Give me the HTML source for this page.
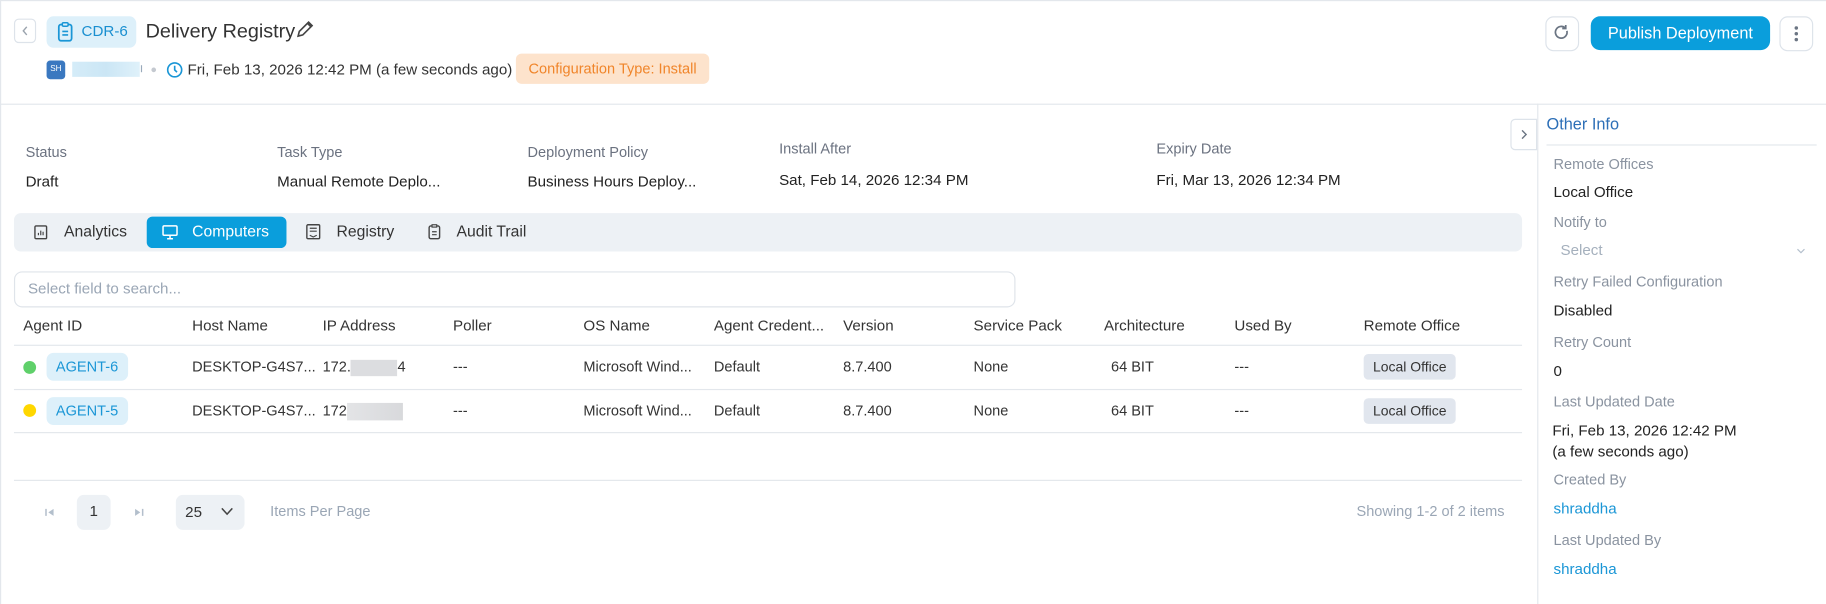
<!DOCTYPE html>
<html><head><meta charset="utf-8"><style>
*{box-sizing:border-box;margin:0;padding:0}
html,body{width:1826px;height:604px;overflow:hidden;background:#fff}
#s{position:absolute;left:0;top:0;width:1568px;height:519px;transform:scale(1.16454);transform-origin:0 0;font-family:"Liberation Sans",sans-serif;color:#333;font-size:13px}
.a{position:absolute;white-space:nowrap}
.lbl{color:#6b7280;font-size:12.5px}
.val{color:#222;font-size:13px}
.rl{color:#8a93a0;font-size:12.5px}
.btn{position:absolute;border:1px solid #dde3ea;border-radius:7px;background:#fff}
.th{color:#333;font-size:13px}
.td{color:#333;font-size:12.5px}
.ag{position:absolute;background:#ddf0fa;color:#1a96d6;border-radius:6px;font-size:12.5px;padding:5px 8px;height:24px}
.lo{position:absolute;background:#e1e6ee;color:#333;border-radius:4px;font-size:12px;padding:4px 8px;height:22px}
</style></head><body><div id="s">
<div class="a" style="left:0;top:0;width:1568px;height:1px;background:#e3e7ec"></div>
<div class="a" style="left:0;top:0;width:1px;height:519px;background:#e3e7ec"></div>
<div class="btn" style="left:12px;top:16px;width:19px;height:21px;border-radius:4px"><svg width="17" height="19" viewBox="0 0 17 19"><path d="M10 6l-3 3.5 3 3.5" fill="none" stroke="#9aa3ad" stroke-width="1.2"/></svg></div>
<div class="a" style="left:40px;top:14px;width:77px;height:27px;background:#ddf0fa;border-radius:6px"></div>
<svg class="a" style="left:48px;top:18px" width="16" height="19" viewBox="0 0 16 19"><rect x="2.5" y="3" width="11" height="14" rx="2" fill="none" stroke="#1a96d6" stroke-width="1.5"/><rect x="5.5" y="1.5" width="5" height="3" rx="1" fill="#ddf0fa" stroke="#1a96d6" stroke-width="1.3"/><path d="M5.5 9h5M5.5 12h5" stroke="#1a96d6" stroke-width="1.4"/></svg>
<div class="a" style="left:70px;top:19px;color:#1a8fd0;font-size:13px">CDR-6</div>
<div class="a" style="left:125px;top:17px;font-size:17px;color:#333">Delivery Registry</div>
<svg class="a" style="left:253px;top:16px" width="18" height="18" viewBox="0 0 18 18"><path d="M3 15l1-4 8-8 3 3-8 8z M11 4l3 3" fill="none" stroke="#444" stroke-width="1.4"/></svg>
<div class="a" style="left:40px;top:52px;width:16px;height:16px;background:#3a78c0;border-radius:3px;color:#fff;font-size:7px;line-height:16px;text-align:center">SH</div>
<div class="a" style="left:62px;top:53px;width:58px;height:13px;background:linear-gradient(90deg,#d5ecf8,#cbe6f5,#dff1fa)"></div>
<div class="a" style="left:121px;top:56px;width:1px;height:6px;background:#9ab"></div>
<div class="a" style="left:130px;top:58px;width:4px;height:4px;border-radius:2px;background:#c4c9d0"></div>
<svg class="a" style="left:143px;top:53px" width="14" height="14" viewBox="0 0 14 14"><circle cx="7" cy="7" r="6" fill="none" stroke="#1a96d6" stroke-width="1.4"/><path d="M7 3.5V7l2 2" fill="none" stroke="#1a96d6" stroke-width="1.4"/></svg>
<div class="a" style="left:161px;top:52px;font-size:13px;color:#333">Fri, Feb 13, 2026 12:42 PM (a few seconds ago)</div>
<div class="a" style="left:443px;top:46px;width:166px;height:26px;background:#fde3cc;border-radius:5px;color:#f0852a;font-size:12.5px;line-height:26px;text-align:center">Configuration Type: Install</div>
<div class="btn" style="left:1327px;top:14px;width:29px;height:30px"><svg width="27" height="28" viewBox="0 0 27 28"><path d="M17.5 11.5a5 5 0 1 1-1.5-2.5" fill="none" stroke="#6b7583" stroke-width="1.5"/><path d="M16.5 6.5v3h-3" fill="none" stroke="#6b7583" stroke-width="1.5"/></svg></div>
<div class="a" style="left:1366px;top:14px;width:154px;height:29px;background:#0a9edc;border-radius:8px;color:#fff;font-size:14px;line-height:29px;text-align:center">Publish Deployment</div>
<div class="btn" style="left:1528px;top:14px;width:29px;height:30px"><svg width="27" height="28" viewBox="0 0 27 28"><circle cx="13.5" cy="9" r="1.5" fill="#6b7583"/><circle cx="13.5" cy="14" r="1.5" fill="#6b7583"/><circle cx="13.5" cy="19" r="1.5" fill="#6b7583"/></svg></div>
<div class="a" style="left:0;top:89px;width:1568px;height:1px;background:#e3e7ec"></div>

<div class="a lbl" style="left:22px;top:124px">Status</div>
<div class="a lbl" style="left:238px;top:124px">Task Type</div>
<div class="a lbl" style="left:453px;top:124px">Deployment Policy</div>
<div class="a lbl" style="left:669px;top:121px">Install After</div>
<div class="a lbl" style="left:993px;top:121px">Expiry Date</div>
<div class="a val" style="left:22px;top:148px">Draft</div>
<div class="a val" style="left:238px;top:148px">Manual Remote Deplo...</div>
<div class="a val" style="left:453px;top:148px">Business Hours Deploy...</div>
<div class="a val" style="left:669px;top:147px">Sat, Feb 14, 2026 12:34 PM</div>
<div class="a val" style="left:993px;top:147px">Fri, Mar 13, 2026 12:34 PM</div>

<div class="a" style="left:12px;top:183px;width:1295px;height:33px;background:#edf1f5;border-radius:6px"></div>
<div class="a" style="left:126px;top:186px;width:120px;height:27px;background:#0a9edc;border-radius:5px"></div>
<svg class="a" style="left:29px;top:193px" width="12" height="13" viewBox="0 0 12 13"><rect x="1" y="1" width="10" height="11" rx="1" fill="none" stroke="#444" stroke-width="1.2"/><path d="M4 9V7M6 9V5M8 9V6" stroke="#444" stroke-width="1"/></svg>
<div class="a" style="left:55px;top:191px;font-size:13.5px;color:#333">Analytics</div>
<svg class="a" style="left:139px;top:193px" width="14" height="13" viewBox="0 0 14 13"><rect x="1" y="1" width="12" height="8" rx="1" fill="none" stroke="#fff" stroke-width="1.3"/><path d="M7 9v3M4.5 12h5" stroke="#fff" stroke-width="1.3"/></svg>
<div class="a" style="left:165px;top:191px;font-size:13.5px;color:#fff">Computers</div>
<svg class="a" style="left:262px;top:192px" width="14" height="14" viewBox="0 0 14 14"><rect x="1.5" y="1" width="11" height="12" rx="1" fill="none" stroke="#444" stroke-width="1.2"/><path d="M4 4h6M4 6.5h6M4 10l3 1.5 3-1.5" fill="none" stroke="#444" stroke-width="1"/></svg>
<div class="a" style="left:289px;top:191px;font-size:13.5px;color:#333">Registry</div>
<svg class="a" style="left:367px;top:192px" width="12" height="14" viewBox="0 0 12 14"><rect x="1.5" y="2" width="9" height="11" rx="1.5" fill="none" stroke="#444" stroke-width="1.2"/><rect x="4" y="1" width="4" height="2" fill="#edf1f5" stroke="#444" stroke-width="1"/><path d="M4 7h4M4 9.5h4" stroke="#444" stroke-width="1"/></svg>
<div class="a" style="left:392px;top:191px;font-size:13.5px;color:#333">Audit Trail</div>

<div class="a" style="left:12px;top:233px;width:860px;height:31px;border:1px solid #dfe4ea;border-radius:7px"></div>
<div class="a" style="left:24px;top:240px;font-size:13px;color:#9aa6b5">Select field to search...</div>

<div class="a th" style="left:20px;top:272px">Agent ID</div>
<div class="a th" style="left:165px;top:272px">Host Name</div>
<div class="a th" style="left:277px;top:272px">IP Address</div>
<div class="a th" style="left:389px;top:272px">Poller</div>
<div class="a th" style="left:501px;top:272px">OS Name</div>
<div class="a th" style="left:613px;top:272px">Agent Credent...</div>
<div class="a th" style="left:724px;top:272px">Version</div>
<div class="a th" style="left:836px;top:272px">Service Pack</div>
<div class="a th" style="left:948px;top:272px">Architecture</div>
<div class="a th" style="left:1060px;top:272px">Used By</div>
<div class="a th" style="left:1171px;top:272px">Remote Office</div>
<div class="a" style="left:12px;top:296px;width:1295px;height:1px;background:#e3e7ec"></div>
<div class="a" style="left:12px;top:334px;width:1295px;height:1px;background:#e3e7ec"></div>
<div class="a" style="left:12px;top:371px;width:1295px;height:1px;background:#e3e7ec"></div>

<div class="a" style="left:20px;top:310px;width:11px;height:11px;border-radius:6px;background:#5fd06a"></div>
<div class="ag" style="left:40px;top:303px">AGENT-6</div>
<div class="a" style="left:20px;top:347px;width:11px;height:11px;border-radius:6px;background:#ffd700"></div>
<div class="ag" style="left:40px;top:341px">AGENT-5</div>

<div class="a td" style="left:165px;top:308px">DESKTOP-G4S7...</div>
<div class="a td" style="left:277px;top:308px">172.<span style="display:inline-block;width:40px;height:14px;background:#dcdde0;vertical-align:middle"></span>4</div>
<div class="a td" style="left:389px;top:308px">---</div>
<div class="a td" style="left:501px;top:308px">Microsoft Wind...</div>
<div class="a td" style="left:613px;top:308px">Default</div>
<div class="a td" style="left:724px;top:308px">8.7.400</div>
<div class="a td" style="left:836px;top:308px">None</div>
<div class="a td" style="left:954px;top:308px">64 BIT</div>
<div class="a td" style="left:1060px;top:308px">---</div>
<div class="lo" style="left:1171px;top:304px">Local Office</div>

<div class="a td" style="left:165px;top:346px">DESKTOP-G4S7...</div>
<div class="a td" style="left:277px;top:346px">172<span style="display:inline-block;width:48px;height:15px;background:linear-gradient(90deg,#e3e4e6,#d8d9dc);vertical-align:middle"></span></div>
<div class="a td" style="left:389px;top:346px">---</div>
<div class="a td" style="left:501px;top:346px">Microsoft Wind...</div>
<div class="a td" style="left:613px;top:346px">Default</div>
<div class="a td" style="left:724px;top:346px">8.7.400</div>
<div class="a td" style="left:836px;top:346px">None</div>
<div class="a td" style="left:954px;top:346px">64 BIT</div>
<div class="a td" style="left:1060px;top:346px">---</div>
<div class="lo" style="left:1171px;top:342px">Local Office</div>

<div class="a" style="left:12px;top:412px;width:1295px;height:1px;background:#e3e7ec"></div>
<svg class="a" style="left:38px;top:435px" width="10" height="10" viewBox="0 0 10 10"><path d="M1.5 2v6" stroke="#b3bfcc" stroke-width="1.3"/><path d="M8 2L3.5 5 8 8z" fill="#b3bfcc"/></svg>
<div class="a" style="left:66px;top:425px;width:29px;height:30px;background:#edf1f5;border-radius:6px;font-size:13px;line-height:28px;text-align:center">1</div>
<svg class="a" style="left:114px;top:435px" width="10" height="10" viewBox="0 0 10 10"><path d="M8.5 2v6" stroke="#b3bfcc" stroke-width="1.3"/><path d="M2 2l4.5 3L2 8z" fill="#b3bfcc"/></svg>
<div class="a" style="left:151px;top:425px;width:59px;height:30px;background:#edf1f5;border-radius:6px"></div>
<div class="a" style="left:159px;top:432px;font-size:13px">25</div>
<svg class="a" style="left:189px;top:434px" width="12" height="10" viewBox="0 0 12 10"><path d="M1.5 2.5L6 7.5 10.5 2.5" fill="none" stroke="#444" stroke-width="1.3"/></svg>
<div class="a" style="left:232px;top:432px;font-size:12.5px;color:#9aa6b5">Items Per Page</div>
<div class="a" style="right:276px;top:432px;font-size:12.5px;color:#9aa6b5">Showing 1-2 of 2 items</div>

<div class="a" style="left:1320px;top:89px;width:1px;height:430px;background:#e3e7ec"></div>
<div class="btn" style="left:1297px;top:102px;width:23px;height:27px;border-radius:4px 0 0 4px"><svg width="21" height="25" viewBox="0 0 21 25"><path d="M9 9l3.5 3.5L9 16" fill="none" stroke="#6b7583" stroke-width="1.2"/></svg></div>
<div class="a" style="left:1328px;top:98px;font-size:14px;color:#2d6fb7">Other Info</div>
<div class="a" style="left:1328px;top:124px;width:232px;height:1px;background:#e3e7ec"></div>
<div class="a rl" style="left:1334px;top:134px">Remote Offices</div>
<div class="a val" style="left:1334px;top:157px">Local Office</div>
<div class="a rl" style="left:1334px;top:184px">Notify to</div>
<div class="a" style="left:1340px;top:207px;font-size:13px;color:#a5b0bd">Select</div>
<svg class="a" style="left:1542px;top:212px" width="9" height="7" viewBox="0 0 9 7"><path d="M1.5 2l3 3 3-3" fill="none" stroke="#b3bfcc" stroke-width="1"/></svg>
<div class="a rl" style="left:1334px;top:235px">Retry Failed Configuration</div>
<div class="a val" style="left:1334px;top:259px">Disabled</div>
<div class="a rl" style="left:1334px;top:287px">Retry Count</div>
<div class="a val" style="left:1334px;top:311px">0</div>
<div class="a rl" style="left:1334px;top:338px">Last Updated Date</div>
<div class="a val" style="left:1333px;top:361px;line-height:18px">Fri, Feb 13, 2026 12:42 PM<br>(a few seconds ago)</div>
<div class="a rl" style="left:1334px;top:405px">Created By</div>
<div class="a" style="left:1334px;top:429px;color:#1a96d6;font-size:13px">shraddha</div>
<div class="a rl" style="left:1334px;top:457px">Last Updated By</div>
<div class="a" style="left:1334px;top:481px;color:#1a96d6;font-size:13px">shraddha</div>
</div></body></html>
